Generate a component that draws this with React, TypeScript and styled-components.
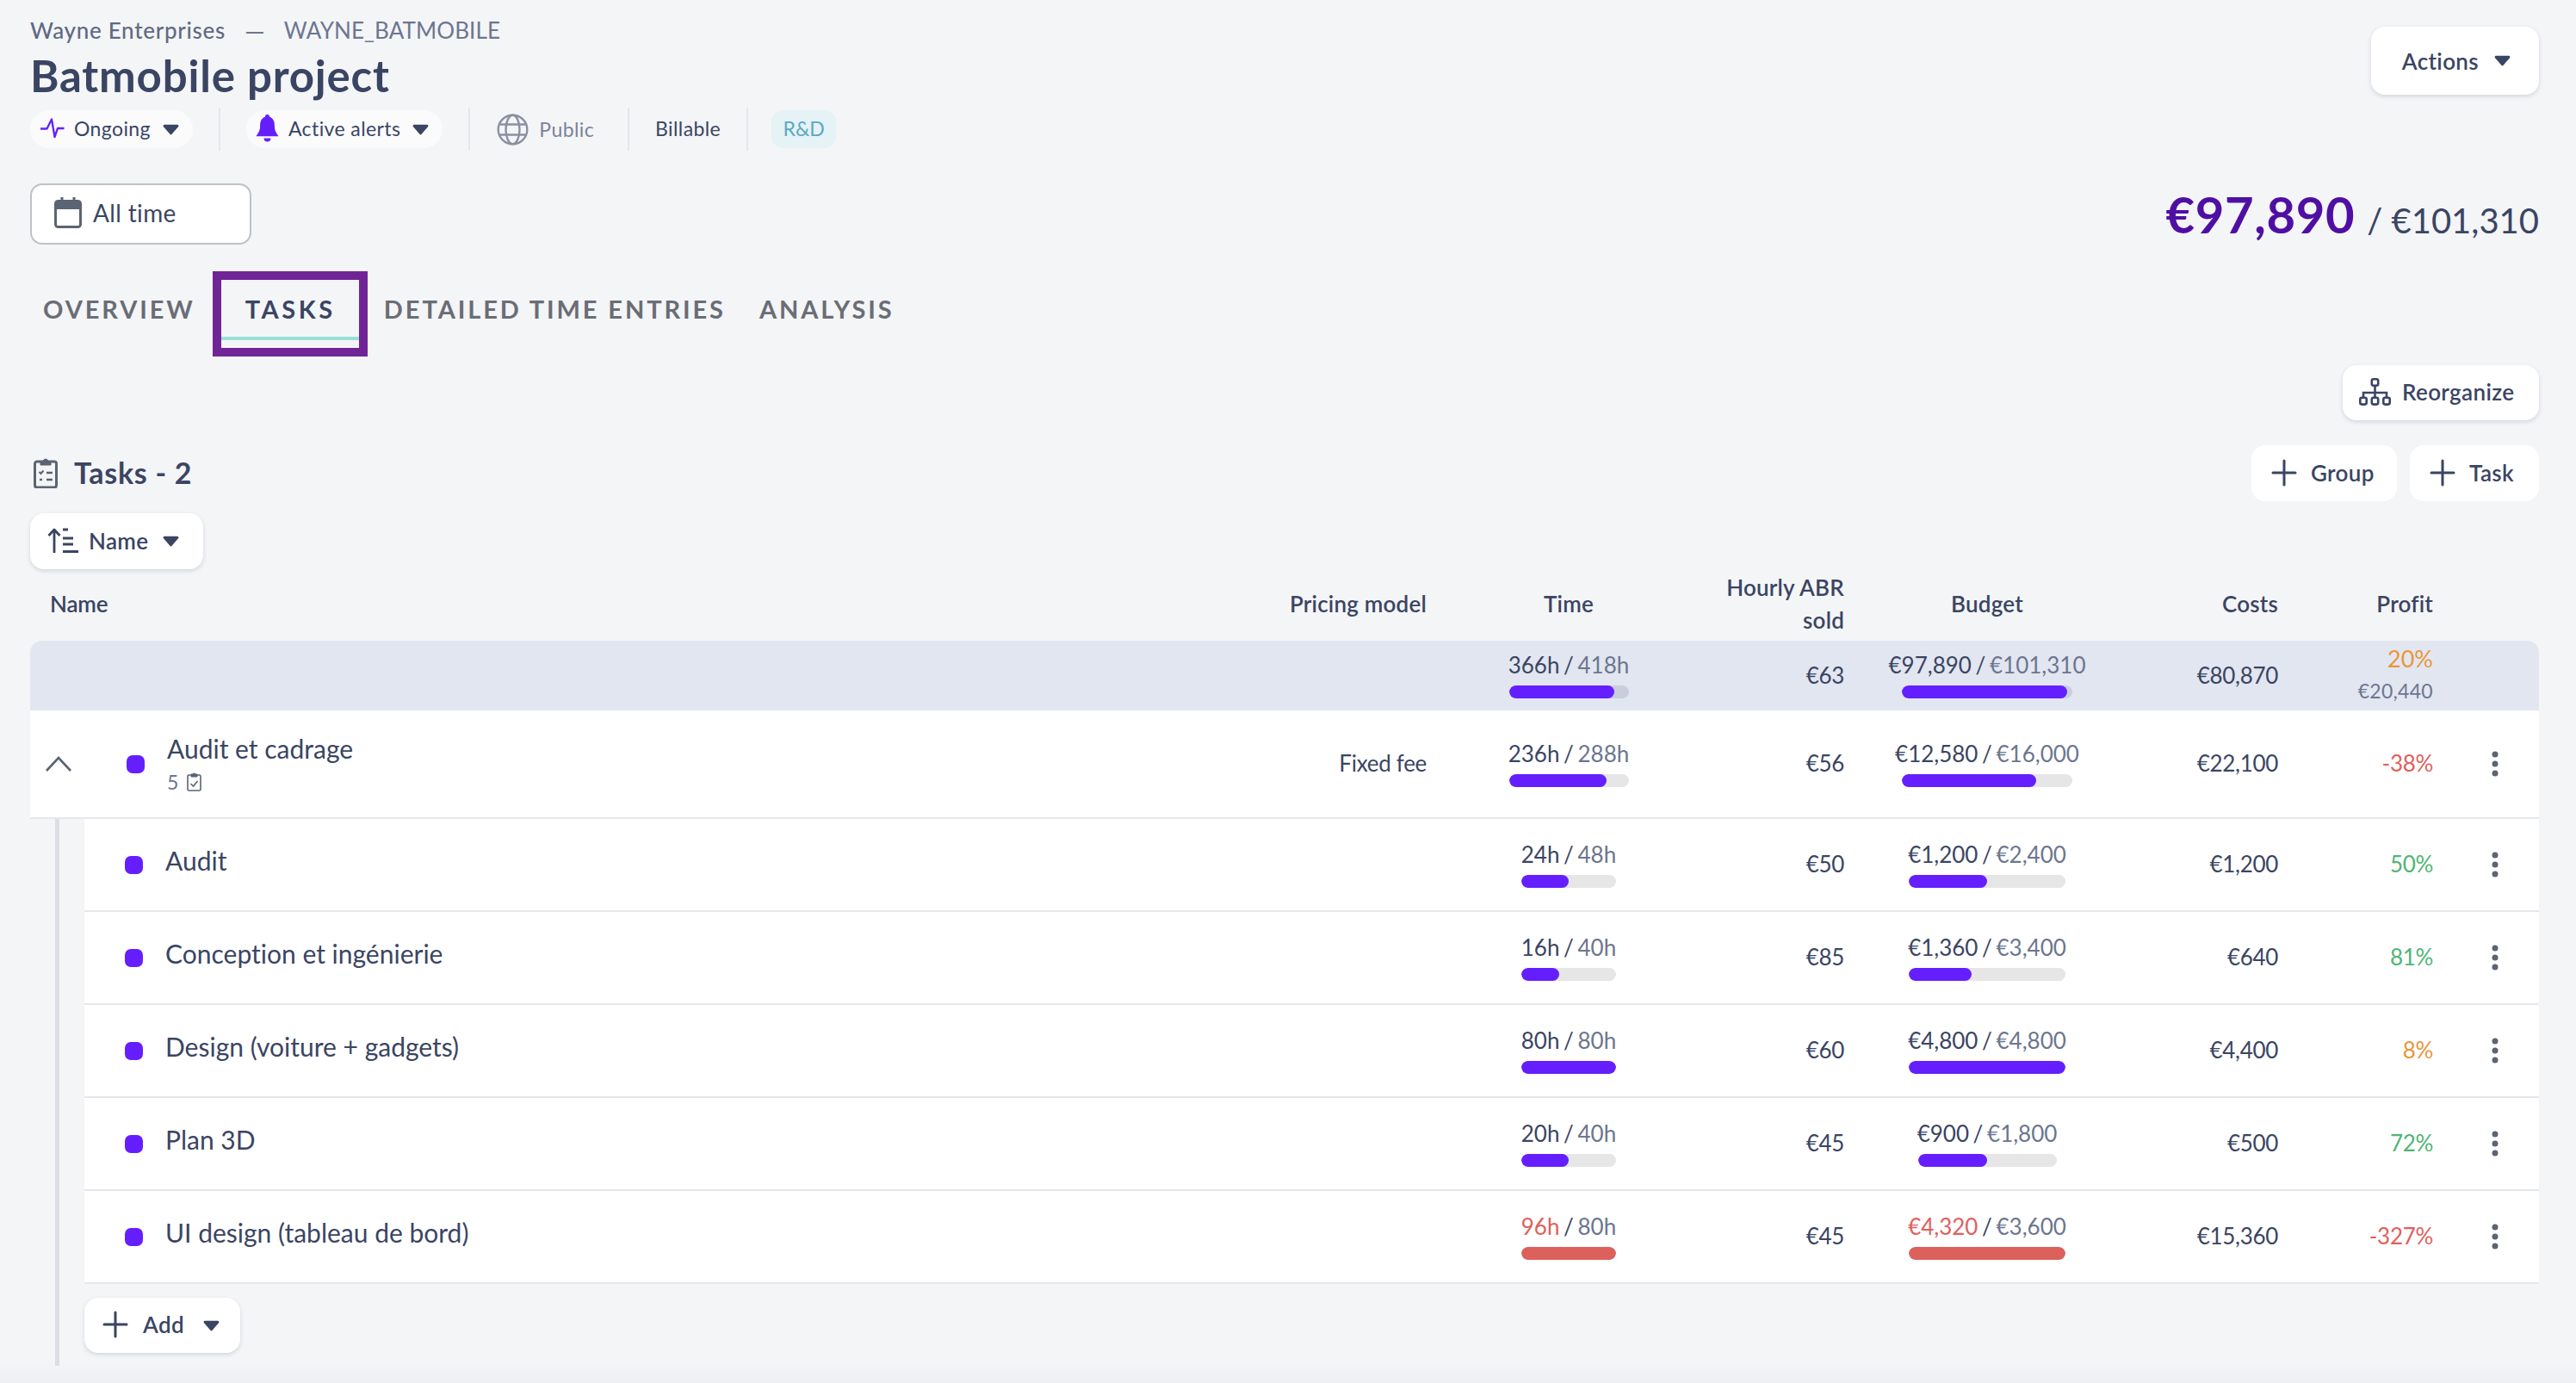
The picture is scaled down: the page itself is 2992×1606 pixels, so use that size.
import styled, { createGlobalStyle } from "styled-components";

type Tone = "dark" | "red" | "green" | "orange";

type TaskRowData = {
  name: string;
  spent: string;
  planned: string;
  timePct: number;
  timeWidth: number;
  rate: string;
  billed: string;
  budget: string;
  budgetPct: number;
  budgetWidth: number;
  costs: string;
  profit: string;
  profitTone: Tone;
  over?: boolean;
};

const INK = "#3a4563";
const MUTED = "#6c7690";
const ICON = "#5b6473";
const VIOLET = "#651fff";

const toneColors: Record<Tone, string> = {
  dark: INK,
  red: "#e0605c",
  green: "#4fb575",
  orange: "#e9963a",
};

const tasks: TaskRowData[] = [
  { name: "Audit", spent: "24h", planned: "48h", timePct: 50, timeWidth: 110, rate: "€50", billed: "€1,200", budget: "€2,400", budgetPct: 50, budgetWidth: 182, costs: "€1,200", profit: "50%", profitTone: "green" },
  { name: "Conception et ingénierie", spent: "16h", planned: "40h", timePct: 40, timeWidth: 110, rate: "€85", billed: "€1,360", budget: "€3,400", budgetPct: 40, budgetWidth: 182, costs: "€640", profit: "81%", profitTone: "green" },
  { name: "Design (voiture + gadgets)", spent: "80h", planned: "80h", timePct: 100, timeWidth: 110, rate: "€60", billed: "€4,800", budget: "€4,800", budgetPct: 100, budgetWidth: 182, costs: "€4,400", profit: "8%", profitTone: "orange" },
  { name: "Plan 3D", spent: "20h", planned: "40h", timePct: 50, timeWidth: 110, rate: "€45", billed: "€900", budget: "€1,800", budgetPct: 50, budgetWidth: 161, costs: "€500", profit: "72%", profitTone: "green" },
  { name: "UI design (tableau de bord)", spent: "96h", planned: "80h", timePct: 100, timeWidth: 110, rate: "€45", billed: "€4,320", budget: "€3,600", budgetPct: 100, budgetWidth: 182, costs: "€15,360", profit: "-327%", profitTone: "red", over: true },
];

const GlobalStyle = createGlobalStyle`
  html, body {
    margin: 0;
    min-height: 100%;
  }
  body {
    height: 1606px;
    overflow: hidden;
    font-family: "Lato", "Open Sans", sans-serif;
    font-variant-ligatures: no-common-ligatures;
    color: ${INK};
    background: linear-gradient(to bottom, #f4f5f7 1580px, #eeeff2 1606px);
  }
`;

const Page = styled.div`
  padding: 20px 43px 0 35px;
`;

const HeaderTop = styled.div`
  display: flex;
  justify-content: space-between;
  align-items: flex-start;
`;

const Breadcrumb = styled.div`
  display: flex;
  align-items: center;
  gap: 22px;
  height: 30px;
  font-size: 26px;
  letter-spacing: 0.1px;
  color: ${MUTED};
`;

const Company = styled.span`
  color: #5f6a82;
  font-weight: 500;
  letter-spacing: 0.7px;
`;

const Dash = styled.span`
  font-size: 30px;
`;

const Title = styled.h1`
  margin: 18px 0 20px;
  height: 40px;
  line-height: 40px;
  font-size: 51px;
  font-weight: 700;
  letter-spacing: 0.8px;
  color: ${INK};
`;

const TagRow = styled.div`
  display: flex;
  align-items: center;
  gap: 30px;
  height: 44px;
`;

const Chip = styled.div`
  display: flex;
  align-items: center;
  box-sizing: border-box;
  height: 44px;
  padding: 0 16px 2px 11px;
  border-radius: 22px;
  background: #fbfbfc;
  font-size: 23px;
  letter-spacing: 0.4px;
  white-space: nowrap;
`;

const ChipIcon = styled.span`
  display: flex;
  margin-right: 11px;
`;

const ChipCaret = styled.span`
  display: flex;
  margin: 2px 0 0 14px;
`;

const TagDivider = styled.div`
  width: 2px;
  height: 50px;
  background: #e6e7eb;
`;

const PlainTag = styled.div<{ $muted?: boolean }>`
  display: flex;
  align-items: center;
  gap: 12px;
  padding-bottom: 2px;
  font-size: 23px;
  letter-spacing: 0.4px;
  color: ${(p) => (p.$muted ? "#7b8398" : INK)};
`;

const PublicTag = styled(PlainTag)`
  padding: 0 9px 0 1px;
`;

const ColorTag = styled.div`
  display: flex;
  align-items: center;
  justify-content: center;
  box-sizing: border-box;
  width: 75px;
  height: 44px;
  margin-left: -3px;
  padding-bottom: 2px;
  border-radius: 14px;
  background: #e5f2f6;
  color: #5ba9c4;
  font-size: 23px;
`;

const ActionsButton = styled.button`
  display: flex;
  align-items: center;
  gap: 18px;
  height: 79px;
  margin-top: 11px;
  padding: 0 33px 0 36px;
  border: none;
  border-radius: 16px;
  background: #fff;
  box-shadow: 0 2px 5px rgba(40, 50, 80, 0.16);
  font: inherit;
  font-size: 26px;
  font-weight: 600;
  letter-spacing: 0.35px;
  color: ${INK};
`;

const DateRow = styled.div`
  display: flex;
  justify-content: space-between;
  align-items: center;
  height: 71px;
  margin-top: 41px;
`;

const DateButton = styled.button`
  display: flex;
  align-items: center;
  gap: 13px;
  box-sizing: border-box;
  width: 257px;
  height: 71px;
  padding: 0 26px 3px;
  border: 2px solid #bfc1c6;
  border-radius: 14px;
  background: #fff;
  font: inherit;
  font-size: 28px;
  letter-spacing: 0.35px;
  color: ${INK};
`;

const Totals = styled.div`
  display: flex;
  align-items: baseline;
  gap: 14px;
  height: 71px;
  line-height: 71px;
  color: ${INK};
  font-size: 40px;
`;

const TotalSpent = styled.span`
  font-size: 58px;
  font-weight: 700;
  letter-spacing: 0.6px;
  color: #4f0fa3;
`;

const TabBar = styled.div`
  display: flex;
  height: 99px;
  margin: 31px 0 0 -4px;
`;

const Tab = styled.div<{ $active?: boolean }>`
  position: relative;
  display: flex;
  align-items: center;
  box-sizing: border-box;
  height: 99px;
  padding: ${(p) => (p.$active ? "0 27px 13px 28px" : "0 20px 13px 19px")};
  border: ${(p) => (p.$active ? "10px solid #702596" : "none")};
  font-size: 29px;
  font-weight: 700;
  letter-spacing: ${(p) => (p.$active ? "3.6px" : "2.9px")};
  white-space: nowrap;
  color: ${(p) => (p.$active ? INK : "#6a6d75")};

  &::after {
    content: "";
    display: ${(p) => (p.$active ? "block" : "none")};
    position: absolute;
    left: 0;
    right: 0;
    bottom: 9px;
    height: 4px;
    background: #96e0d8;
  }
`;

const ReorganizeRow = styled.div`
  display: flex;
  justify-content: flex-end;
  margin-top: 10px;
`;

const ToolButton = styled.button<{ $flat?: boolean }>`
  display: flex;
  align-items: center;
  height: 65px;
  border: none;
  border-radius: 16px;
  background: #fff;
  box-shadow: ${(p) => (p.$flat ? "none" : "0 2px 5px rgba(40, 50, 80, 0.16)")};
  font: inherit;
  font-size: 26px;
  font-weight: 600;
  letter-spacing: 0.35px;
  color: ${INK};
`;

const ReorganizeButton = styled(ToolButton)`
  gap: 13px;
  width: 228px;
  height: 64px;
  padding: 0 0 2px 19px;
`;

const GroupButton = styled(ToolButton)`
  gap: 16px;
  width: 169px;
  padding: 0 0 2px 23px;
`;

const TaskButton = styled(ToolButton)`
  gap: 16px;
  width: 150px;
  padding: 0 0 2px 23px;
`;

const SortButton = styled(ToolButton)`
  gap: 12px;
  width: 201px;
  margin-top: 14px;
  padding: 0 0 2px 20px;
`;

const AddButton = styled(ToolButton)`
  gap: 17px;
  width: 181px;
  height: 64px;
  padding: 0 0 2px 21px;
`;

const CaretGap = styled.span`
  display: flex;
  margin: 2px 0 0 5px;
`;

const SectionHead = styled.div`
  display: flex;
  justify-content: space-between;
  align-items: center;
  margin-top: 29px;
`;

const SectionTitle = styled.h2`
  display: flex;
  align-items: center;
  gap: 19px;
  margin: 0 0 0 4px;
  padding-bottom: 2px;
  font-size: 34px;
  font-weight: 700;
  letter-spacing: 0.7px;
  color: ${INK};
`;

const SectionActions = styled.div`
  display: flex;
  gap: 15px;
`;

const columns = "minmax(0, 1fr) 322px 200px 264px 244px 216px 180px 123px";

const HeadRow = styled.div`
  display: grid;
  grid-template-columns: ${columns};
  align-items: center;
  box-sizing: border-box;
  height: 83px;
  padding-bottom: 3px;
  font-size: 26px;
  font-weight: 600;
  letter-spacing: 0.2px;
  color: ${INK};
`;

const HeadName = styled.div`
  padding-left: 23px;
  letter-spacing: -0.2px;
`;

const RightCell = styled.div<{ $pad?: number; $tone?: Tone }>`
  padding: 0 ${(p) => p.$pad ?? 0}px 2px 0;
  text-align: right;
  font-size: 26px;
  letter-spacing: -0.3px;
  color: ${(p) => toneColors[p.$tone ?? "dark"]};
`;

const HeadRight = styled(RightCell)`
  padding-bottom: 0;
  font-size: 26px;
  line-height: 38px;
  font-weight: 600;
  letter-spacing: 0.2px;
`;

const HeadCenter = styled.div`
  text-align: center;
`;

const SummaryRow = styled.div`
  display: grid;
  grid-template-columns: ${columns};
  align-items: center;
  height: 81px;
  border-radius: 14px 14px 0 0;
  background: #e2e6f0;
`;

const GroupRow = styled.div`
  display: grid;
  grid-template-columns: ${columns};
  align-items: center;
  box-sizing: border-box;
  height: 126px;
  border-bottom: 2px solid #e6e7ea;
  background: #fff;
`;

const TaskRow = styled.div`
  display: grid;
  grid-template-columns: ${columns};
  align-items: center;
  box-sizing: border-box;
  height: 108px;
  border-bottom: 2px solid #e6e7ea;
  background: #fff;
`;

const TreeBranch = styled.div`
  margin-left: 29px;
  padding: 0 0 15px 29px;
  border-left: 5px solid #dcdee3;
`;

const AddRow = styled.div`
  margin-top: 16px;
`;

const GroupName = styled.div`
  display: flex;
  align-items: center;
  padding-left: 18px;
`;

const TaskName = styled.div`
  display: flex;
  align-items: center;
  gap: 26px;
  padding-left: 47px;
`;

const Dot = styled.span`
  flex: none;
  width: 21px;
  height: 21px;
  border-radius: 7px;
  background: ${VIOLET};
`;

const GroupDot = styled(Dot)`
  margin: 0 26px 0 64px;
`;

const NameLabel = styled.div`
  padding-bottom: 10px;
  font-size: 30px;
  white-space: nowrap;
  color: ${INK};
`;

const GroupLabel = styled.div`
  font-size: 30px;
  line-height: 38px;
  white-space: nowrap;
`;

const SubCount = styled.div`
  display: flex;
  align-items: center;
  gap: 10px;
  height: 32px;
  margin-top: 4px;
  font-size: 23px;
  color: ${MUTED};
`;

const Metric = styled.div`
  display: flex;
  flex-direction: column;
  align-items: center;
  gap: 8px;
`;

const MetricText = styled.div`
  height: 30px;
  line-height: 28px;
  font-size: 26px;
  word-spacing: -2px;
  white-space: nowrap;
  color: ${INK};
`;

const Done = styled.span<{ $over?: boolean }>`
  color: ${(p) => (p.$over ? toneColors.red : INK)};
`;

const Planned = styled.span`
  color: ${MUTED};
`;

const Track = styled.div<{ $width: number; $dim?: boolean }>`
  width: ${(p) => p.$width}px;
  height: 15px;
  overflow: hidden;
  border-radius: 8px;
  background: ${(p) => (p.$dim ? "#c9cedd" : "#e6e6e6")};
`;

const Fill = styled.div<{ $over?: boolean }>`
  height: 100%;
  border-radius: 8px;
  background: ${(p) => (p.$over ? "#dc615d" : VIOLET)};
`;

const ProfitStack = styled.div`
  display: flex;
  flex-direction: column;
  align-items: flex-end;
  gap: 8px;
  padding-bottom: 3px;
`;

const ProfitPct = styled.div`
  height: 30px;
  line-height: 30px;
  font-size: 27px;
  color: ${toneColors.orange};
`;

const ProfitAmount = styled.div`
  height: 28px;
  line-height: 28px;
  font-size: 23px;
  letter-spacing: 0.3px;
  color: ${MUTED};
`;

const KebabCell = styled.div`
  display: flex;
  justify-content: center;
  padding-left: 21px;
`;

const Caret = () => (
  <svg width="19" height="13" viewBox="0 0 19 13">
    <path d="M2 .8h15a1.4 1.4 0 0 1 1 2.4l-7.4 8.6a1.4 1.4 0 0 1-2.2 0L1 3.200A1.400 1.400 0 0 1 2 .8z" fill={INK} />
  </svg>
);

const PulseIcon = () => (
  <svg width="29" height="24" viewBox="0 0 29 24" fill="none">
    <path d="M1 12.500H8.500L14 1.500 17.500 22 21 12H28.500" stroke={VIOLET} strokeWidth="2.300" strokeLinejoin="round" />
  </svg>
);

const BellIcon = () => (
  <svg width="27" height="32" viewBox="0 0 27 32">
    <path d="M13.500 0a2.500 2.500 0 0 1 2.500 2.800c4.300 1.300 5.900 5 5.900 10.200 0 5.800 1.800 8 4.600 12.200H.5C3.300 21 5.100 18.800 5.100 13c0-5.200 1.600-8.900 5.900-10.200A2.500 2.500 0 0 1 13.500 0z" fill={VIOLET} />
    <path d="M9.500 27.500h8a4 4 0 0 1-8 0z" fill={VIOLET} />
  </svg>
);

const GlobeIcon = () => (
  <svg width="37" height="37" viewBox="0 0 37 37" fill="none" stroke="#8a90a2" strokeWidth="2.400">
    <circle cx="18.500" cy="18.500" r="16.800" />
    <ellipse cx="18.500" cy="18.500" rx="8" ry="16.800" />
    <path d="M3.500 12.500h30M3.500 24.500h30" />
  </svg>
);

const CalendarIcon = () => (
  <svg width="32" height="36" viewBox="0 0 32 36" fill="none">
    <rect x="1.500" y="4.500" width="29" height="30" rx="3" stroke={ICON} strokeWidth="3" />
    <path d="M2 6a2 2 0 0 1 2-2h24a2 2 0 0 1 2 2v8H2z" fill={ICON} />
    <path d="M9 0v6M23 0v6" stroke={ICON} strokeWidth="3" />
  </svg>
);

const ClipboardListIcon = () => (
  <svg width="28" height="36" viewBox="0 0 28 36" fill="none" stroke={ICON}>
    <path d="M8 5H4a2.500 2.500 0 0 0-2.500 2.500v25A2.500 2.500 0 0 0 4 35h20a2.500 2.500 0 0 0 2.500-2.500v-25A2.500 2.500 0 0 0 24 5h-4" strokeWidth="3" />
    <path d="M8 4h3.200a3 3 0 0 1 5.600 0H20v5H8z" fill={ICON} strokeWidth="1" />
    <path d="M6.500 17l2 2 3-3.500" strokeWidth="2" />
    <path d="M15 18h7M15 26h7" strokeWidth="2.400" />
    <path d="M7 26h3" strokeWidth="2.400" strokeDasharray="3 0" />
  </svg>
);

const ClipboardCheckIcon = () => (
  <svg width="17" height="22" viewBox="0 0 17 22" fill="none" stroke={ICON}>
    <path d="M5 3H2.500A1.500 1.500 0 0 0 1 4.500v15A1.500 1.500 0 0 0 2.500 21h12a1.500 1.500 0 0 0 1.500-1.500v-15A1.500 1.500 0 0 0 14.500 3H12" strokeWidth="1.600" />
    <path d="M5 2h2a1.600 1.600 0 0 1 3 0h2v3H5z" fill={ICON} strokeWidth="1" />
    <path d="M4.500 13l3 3 5-6" strokeWidth="1.600" />
  </svg>
);

const SitemapIcon = () => (
  <svg width="37" height="32" viewBox="0 0 37 32" fill="none" stroke={INK} strokeWidth="2.600">
    <rect x="14.800" y="1.300" width="7.400" height="7.400" rx="2" />
    <rect x="1.300" y="22.800" width="7.400" height="7.800" rx="2" />
    <rect x="14.800" y="22.800" width="7.400" height="7.800" rx="2" />
    <rect x="28.300" y="22.800" width="7.400" height="7.800" rx="2" />
    <path d="M18.500 9v13.500M5 22.500v-5.500h27v5.500" />
  </svg>
);

const PlusIcon = () => (
  <svg width="30" height="32" viewBox="0 0 30 32" fill="none" stroke={INK} strokeWidth="3" strokeLinecap="round">
    <path d="M15 2v28M2 16h26" />
  </svg>
);

const SortIcon = () => (
  <svg width="36" height="30" viewBox="0 0 36 30" fill="none" stroke={INK} strokeWidth="2.800">
    <path d="M8 29V2M1.500 9L8 2l6.500 7" strokeLinejoin="round" />
    <path d="M18 2h6M18 12h12M18 19h12M18 27.500h18" />
  </svg>
);

const ChevronIcon = () => (
  <svg width="30" height="18" viewBox="0 0 30 18" fill="none" stroke={ICON} strokeWidth="2.600">
    <path d="M1 17L15 2l14 15" />
  </svg>
);

const KebabIcon = () => (
  <svg width="8" height="30" viewBox="0 0 8 30" fill={ICON}>
    <circle cx="4" cy="4" r="3.500" />
    <circle cx="4" cy="15" r="3.500" />
    <circle cx="4" cy="26" r="3.500" />
  </svg>
);

const MetricBar = ({ width, pct, over, dim }: { width: number; pct: number; over?: boolean; dim?: boolean }) => (
  <Track $width={width} $dim={dim}>
    <Fill $over={over} style={{ width: `${pct}%` }} />
  </Track>
);

const App = () => {
  return (
    <Page>
      <GlobalStyle />
      <HeaderTop>
        <div>
          <Breadcrumb>
            <Company>Wayne Enterprises</Company>
            <Dash>—</Dash>
            <span>WAYNE_BATMOBILE</span>
          </Breadcrumb>
          <Title>Batmobile project</Title>
          <TagRow>
            <Chip>
              <ChipIcon><PulseIcon /></ChipIcon>
              Ongoing
              <ChipCaret><Caret /></ChipCaret>
            </Chip>
            <TagDivider />
            <Chip>
              <ChipIcon><BellIcon /></ChipIcon>
              Active alerts
              <ChipCaret><Caret /></ChipCaret>
            </Chip>
            <TagDivider />
            <PublicTag $muted>
              <GlobeIcon />
              Public
            </PublicTag>
            <TagDivider />
            <PlainTag>Billable</PlainTag>
            <TagDivider />
            <ColorTag>R&amp;D</ColorTag>
          </TagRow>
        </div>
        <ActionsButton>
          Actions
          <Caret />
        </ActionsButton>
      </HeaderTop>

      <DateRow>
        <DateButton>
          <CalendarIcon />
          All time
        </DateButton>
        <Totals>
          <TotalSpent>€97,890</TotalSpent>
          <span>/ €101,310</span>
        </Totals>
      </DateRow>

      <TabBar>
        <Tab>OVERVIEW</Tab>
        <Tab $active>TASKS</Tab>
        <Tab>DETAILED TIME ENTRIES</Tab>
        <Tab>ANALYSIS</Tab>
      </TabBar>

      <ReorganizeRow>
        <ReorganizeButton>
          <SitemapIcon />
          Reorganize
        </ReorganizeButton>
      </ReorganizeRow>

      <SectionHead>
        <SectionTitle>
          <ClipboardListIcon />
          Tasks - 2
        </SectionTitle>
        <SectionActions>
          <GroupButton $flat>
            <PlusIcon />
            Group
          </GroupButton>
          <TaskButton $flat>
            <PlusIcon />
            Task
          </TaskButton>
        </SectionActions>
      </SectionHead>

      <SortButton>
        <SortIcon />
        Name
        <CaretGap><Caret /></CaretGap>
      </SortButton>

      <HeadRow>
        <HeadName>Name</HeadName>
        <HeadRight $pad={65}>Pricing model</HeadRight>
        <HeadCenter>Time</HeadCenter>
        <HeadRight $pad={44}>Hourly ABR<br />sold</HeadRight>
        <HeadCenter>Budget</HeadCenter>
        <HeadRight>Costs</HeadRight>
        <HeadRight>Profit</HeadRight>
        <div />
      </HeadRow>

      <SummaryRow>
        <div />
        <div />
        <Metric>
          <MetricText><Done>366h</Done> / <Planned>418h</Planned></MetricText>
          <MetricBar width={139} pct={88} dim />
        </Metric>
        <RightCell $pad={44}>€63</RightCell>
        <Metric>
          <MetricText><Done>€97,890</Done> / <Planned>€101,310</Planned></MetricText>
          <MetricBar width={198} pct={97} dim />
        </Metric>
        <RightCell>€80,870</RightCell>
        <ProfitStack>
          <ProfitPct>20%</ProfitPct>
          <ProfitAmount>€20,440</ProfitAmount>
        </ProfitStack>
        <div />
      </SummaryRow>

      <GroupRow>
        <GroupName>
          <ChevronIcon />
          <GroupDot />
          <div>
            <GroupLabel>Audit et cadrage</GroupLabel>
            <SubCount>5 <ClipboardCheckIcon /></SubCount>
          </div>
        </GroupName>
        <RightCell $pad={65}>Fixed fee</RightCell>
        <Metric>
          <MetricText><Done>236h</Done> / <Planned>288h</Planned></MetricText>
          <MetricBar width={139} pct={82} />
        </Metric>
        <RightCell $pad={44}>€56</RightCell>
        <Metric>
          <MetricText><Done>€12,580</Done> / <Planned>€16,000</Planned></MetricText>
          <MetricBar width={198} pct={79} />
        </Metric>
        <RightCell>€22,100</RightCell>
        <RightCell $tone="red">-38%</RightCell>
        <KebabCell><KebabIcon /></KebabCell>
      </GroupRow>

      <TreeBranch>
        {tasks.map((task) => (
          <TaskRow key={task.name}>
            <TaskName>
              <Dot />
              <NameLabel>{task.name}</NameLabel>
            </TaskName>
            <div />
            <Metric>
              <MetricText><Done $over={task.over}>{task.spent}</Done> / <Planned>{task.planned}</Planned></MetricText>
              <MetricBar width={task.timeWidth} pct={task.timePct} over={task.over} />
            </Metric>
            <RightCell $pad={44}>{task.rate}</RightCell>
            <Metric>
              <MetricText><Done $over={task.over}>{task.billed}</Done> / <Planned>{task.budget}</Planned></MetricText>
              <MetricBar width={task.budgetWidth} pct={task.budgetPct} over={task.over} />
            </Metric>
            <RightCell>{task.costs}</RightCell>
            <RightCell $tone={task.profitTone}>{task.profit}</RightCell>
            <KebabCell><KebabIcon /></KebabCell>
          </TaskRow>
        ))}
        <AddRow>
          <AddButton>
            <PlusIcon />
            Add
            <CaretGap><Caret /></CaretGap>
          </AddButton>
        </AddRow>
      </TreeBranch>
    </Page>
  );
};

export default App;
